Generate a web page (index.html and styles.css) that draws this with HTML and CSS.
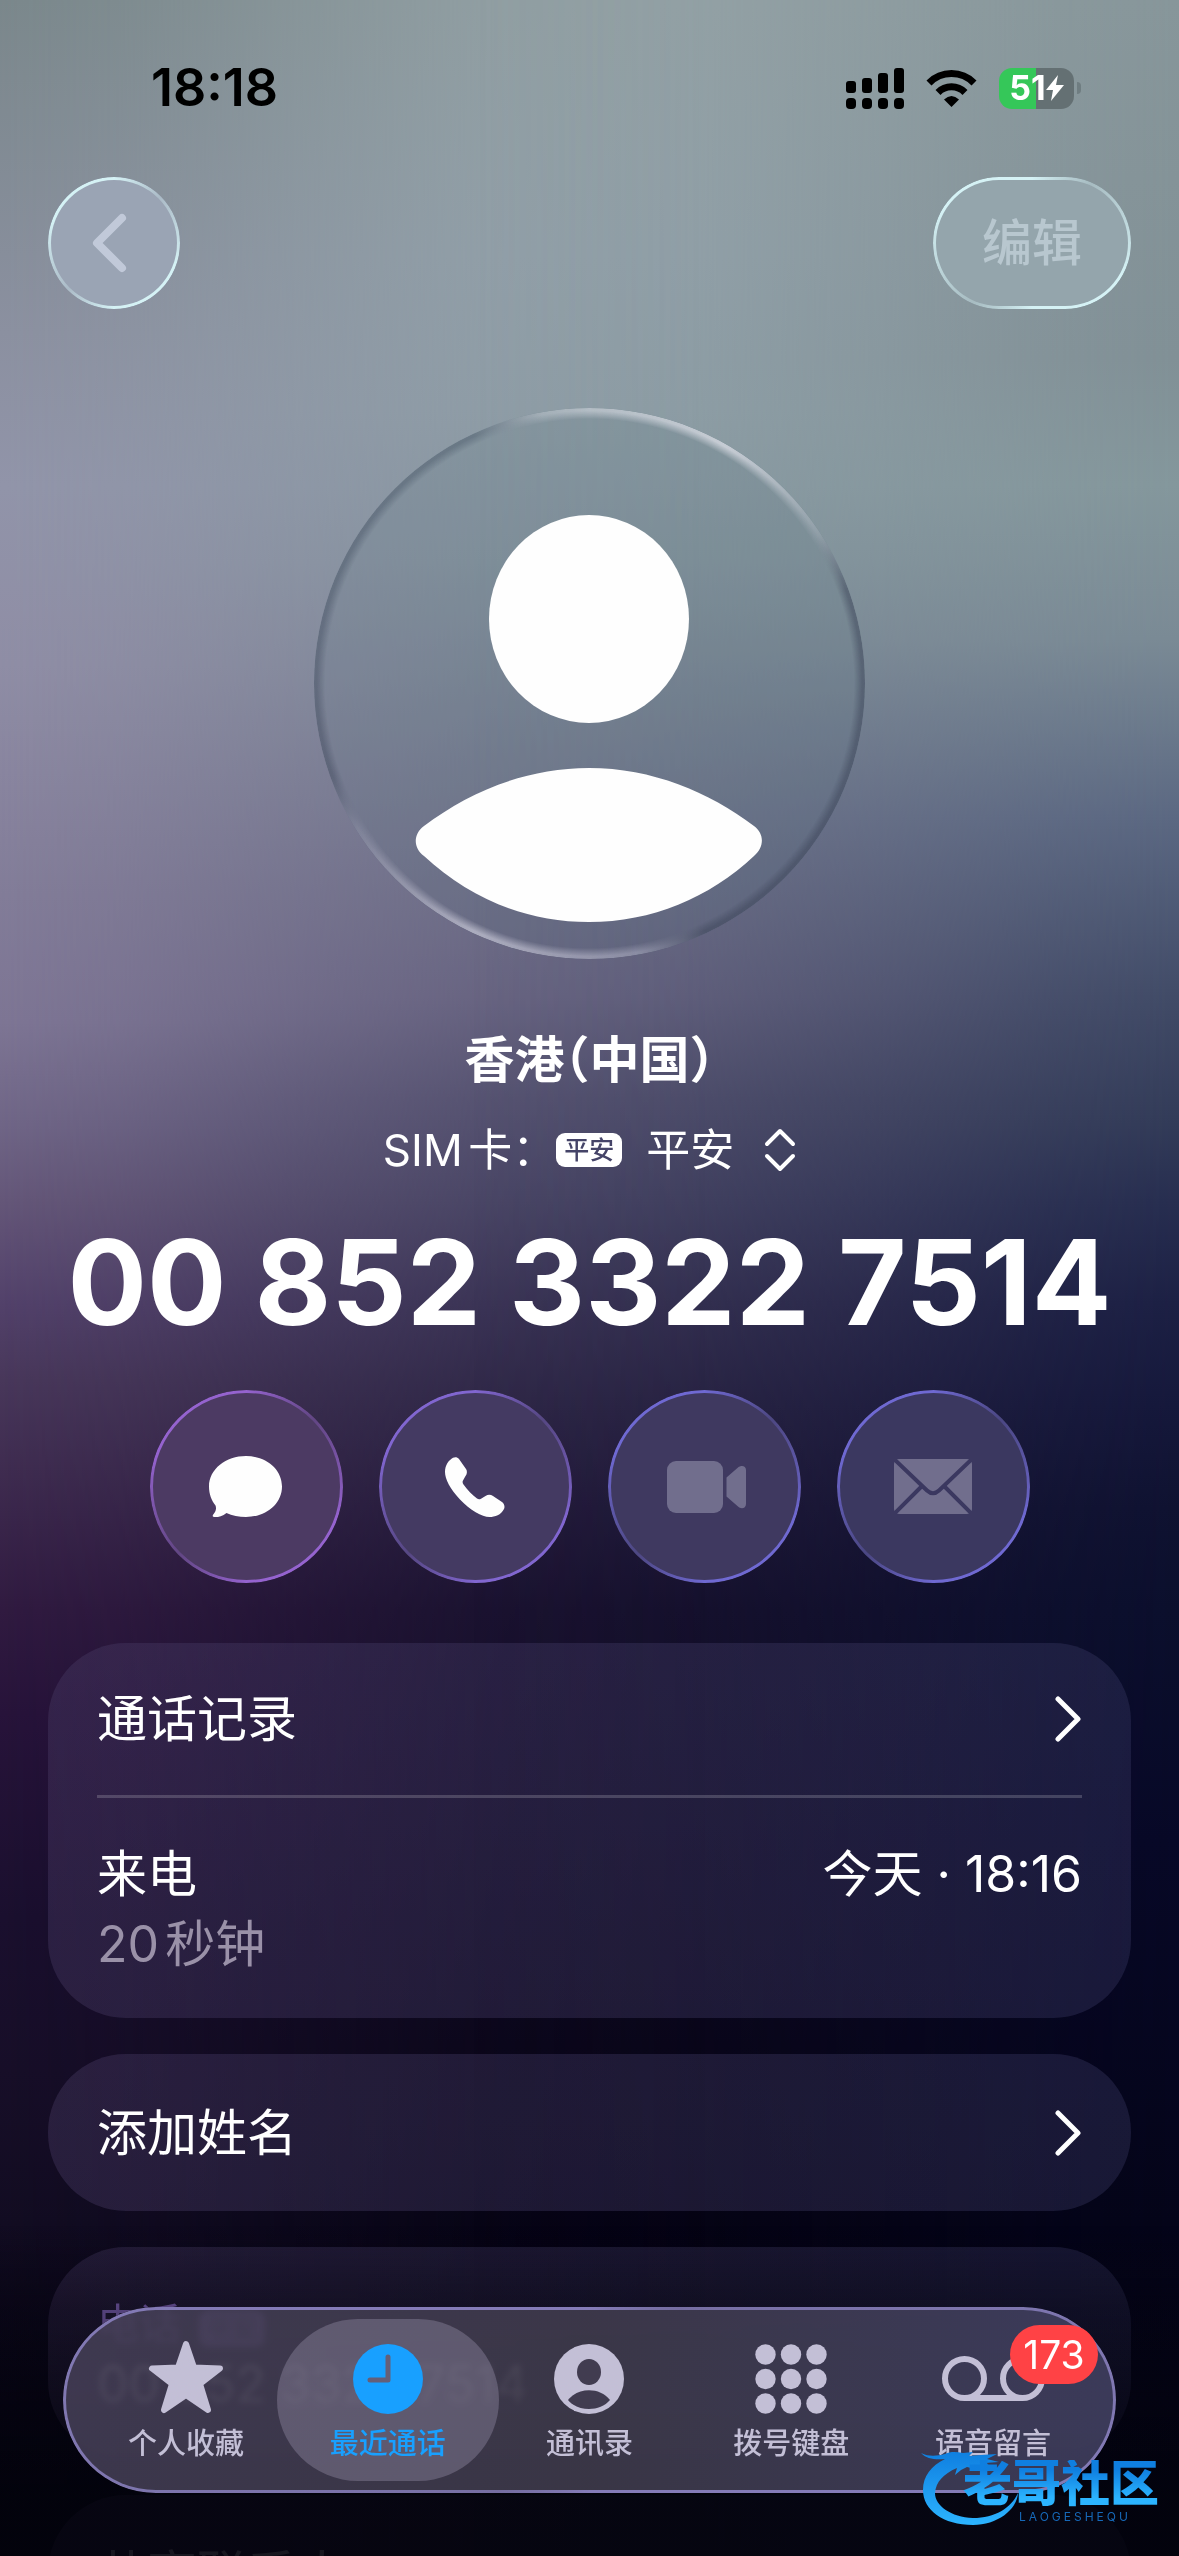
FILE: index.html
```html
<!doctype html>
<html lang="zh-CN">
    <head>
        <meta charset="UTF-8" />
        <meta name="viewport" content="width=device-width, initial-scale=1.0" />
        <title>通话详情</title>
        <link rel="stylesheet" href="styles.css">
    </head>
    <body>
        <div class="backdrop"></div>

        <main class="screen">
            <div class="status-bar">
                <span class="clock">18:18</span>
                <div class="status-icons">
                    <svg width="58" height="41" viewBox="0 0 58 41">
                        <rect x="0" y="13" width="10" height="12" rx="3" />
                        <rect x="16" y="10" width="10" height="15" rx="3" />
                        <rect x="32" y="5" width="10" height="20" rx="3" />
                        <rect x="48" y="0" width="10" height="25" rx="3" />
                        <rect x="0" y="30" width="10" height="11" rx="4" />
                        <rect x="16" y="30" width="10" height="11" rx="4" />
                        <rect x="32" y="30" width="10" height="11" rx="4" />
                        <rect x="48" y="30" width="10" height="11" rx="4" />
                    </svg>
                    <svg width="51" height="38" viewBox="0 0 51 38">
                        <g fill="none" stroke="#000" stroke-width="7">
                            <path d="M3 14A31.500 31.500 0 0 1 48 14" />
                            <path d="M12 23.500A19 19 0 0 1 39 23.500" />
                        </g>
                        <path d="M25.500 38L18 30.500Q25.500 23.500 33 30.500Z" />
                    </svg>
                    <div class="battery">
                        <span>51</span>
                        <svg width="18" height="26" viewBox="0 0 18 26">
                            <path d="M12 0L0 15H7L5 26L18 10H10Z" fill="#fff" />
                        </svg>
                    </div>
                </div>
            </div>

            <nav class="toolbar">
                <button class="glass back-button" aria-label="返回">
                    <svg width="36" height="60" viewBox="0 0 36 60">
                        <path d="M31 5L6 30L31 55" />
                    </svg>
                </button>
                <button class="glass edit-button">编辑</button>
            </nav>

            <div class="avatar">
                <svg viewBox="0 0 551 551">
                    <ellipse cx="275" cy="211" rx="100" ry="104" />
                    <path
                        d="M110 418C155 384 212 360 275 360C338 360 395 384 440 418C451 426 450 440 440 448C395 490 338 514 275 514C212 514 155 490 110 448C99 440 99 426 110 418Z"
                    />
                </svg>
            </div>

            <h1>香港（中国）</h1>

            <button class="sim-picker">
                <span>SIM卡：</span>
                <span class="sim-badge">平安</span>
                <span>平安</span>
                <svg width="32" height="44" viewBox="0 0 32 44">
                    <path d="M3 16L16 3L29 16M3 28L16 41L29 28" />
                </svg>
            </button>

            <p class="phone-number">00 852 3322 7514</p>

            <div class="actions">
                <button class="glass action message" aria-label="信息">
                    <svg width="74" height="62" viewBox="0 0 74 62">
                        <path
                            d="M37 0C57 0 73 13 73 30.500S57 61 37 61C30 61 23 59.500 17.500 57C13 60.500 8 61.500 5 61C3 60.500 3.500 59 5 57.500C7 55 7.500 52 6.500 49.500C2.500 44.500 0 38 0 30.500C0 13 17 0 37 0Z"
                        />
                    </svg>
                </button>
                <button class="glass action call" aria-label="呼叫">
                    <svg width="60" height="60" viewBox="0 0 60 60">
                        <path
                            d="M0 15C0 8 4 3 8 .8C10-.4 12.500 0 14 2L21 12C22.500 14 22 17 20.500 19L18 23.500C17.300 25 17.500 26 18.500 27.500C22.500 33 27 38 32 41.500C33.500 42.500 34.500 42.500 36 41.700L40.500 39C43 37.300 45.500 37.300 48 39L57 45C59.500 47 60 49.500 59 52C56 58 50 60 44.500 60C37 60 25 53 15 42.500C5 32 0 22 0 15Z"
                        />
                    </svg>
                </button>
                <button class="glass action video" aria-label="视频" disabled>
                    <svg width="86" height="52" viewBox="-6 0 86 52">
                        <rect width="56" height="52" rx="9" />
                        <path
                            d="M59.500 16.500L71 6.500C74 4 79 4.500 79 9V43C79 47.500 74 48.500 71 45.500L59.500 35.500Z"
                        />
                    </svg>
                </button>
                <button class="glass action mail" aria-label="邮件" disabled>
                    <svg width="78" height="55" viewBox="0 0 78 55">
                        <mask id="envelope">
                            <rect width="78" height="55" fill="#fff" />
                            <g fill="none" stroke="#000" stroke-width="4">
                                <path d="M0 0L33 31.500Q39 37 45 31.500L78 0" />
                                <path d="M0 55L29 26M78 55L49 26" />
                            </g>
                        </mask>
                        <rect width="78" height="55" rx="5" mask="url(#envelope)" />
                    </svg>
                </button>
            </div>

            <section class="card">
                <a class="card-row" href="#history">
                    <span>通话记录</span>
                    <svg width="27" height="46" viewBox="0 0 27 46">
                        <path d="M3 3L23 23L3 43" />
                    </svg>
                </a>
                <div class="call-entry">
                    <div>
                        <p>来电</p>
                        <p class="duration">20秒钟</p>
                    </div>
                    <time>今天 · 18:16</time>
                </div>
            </section>

            <section class="card">
                <a class="card-row" href="#name">
                    <span>添加姓名</span>
                    <svg width="27" height="46" viewBox="0 0 27 46">
                        <path d="M3 3L23 23L3 43" />
                    </svg>
                </a>
            </section>

            <section class="card phone-card">
                <p class="phone-label">电话 <span class="sim-badge">平安</span></p>
                <p>00 852 3322 7514</p>
            </section>

            <section class="card share-card">
                <a class="card-row" href="#share">共享联系人</a>
            </section>
        </main>

        <div class="bottom-fade"></div>

        <nav class="glass tab-bar">
            <a class="tab" href="#favorites">
                <svg width="76" height="74" viewBox="0 0 76 74">
                    <path
                        d="M38 4L46 27.500L72 28.500L52 44L60 70L38 55L16 70L24 44L4 28.500L30 27.500Z"
                        stroke="currentColor"
                        stroke-width="6"
                        stroke-linejoin="round"
                    />
                </svg>
                个人收藏
            </a>
            <a class="tab active" href="#recents">
                <svg width="70" height="70" viewBox="0 0 70 70">
                    <circle cx="35" cy="35" r="35" />
                    <path
                        d="M35 13V36H17"
                        fill="none"
                        stroke="#655f78"
                        stroke-width="5"
                        stroke-linecap="round"
                        stroke-linejoin="round"
                    />
                </svg>
                最近通话
            </a>
            <a class="tab" href="#contacts">
                <svg width="70" height="70" viewBox="0 0 70 70">
                    <circle cx="35" cy="35" r="35" />
                    <g fill="#413c50">
                        <ellipse cx="35" cy="28" rx="12" ry="13" />
                        <path d="M14 56C24 43 46 43 56 56C46 68 24 68 14 56Z" />
                    </g>
                </svg>
                通讯录
            </a>
            <a class="tab" href="#keypad">
                <svg width="72" height="70" viewBox="0 0 72 70">
                    <circle cx="10.500" cy="10.500" r="10.200" />
                    <circle cx="36" cy="10.500" r="10.200" />
                    <circle cx="61.500" cy="10.500" r="10.200" />
                    <circle cx="10.500" cy="35" r="10.200" />
                    <circle cx="36" cy="35" r="10.200" />
                    <circle cx="61.500" cy="35" r="10.200" />
                    <circle cx="10.500" cy="59.500" r="10.200" />
                    <circle cx="36" cy="59.500" r="10.200" />
                    <circle cx="61.500" cy="59.500" r="10.200" />
                </svg>
                拨号键盘
            </a>
            <a class="tab" href="#voicemail">
                <svg class="tape" width="103" height="46" viewBox="0 0 103 46">
                    <g fill="none" stroke="currentColor" stroke-width="6">
                        <circle cx="22.500" cy="22.500" r="19.500" />
                        <circle cx="80.500" cy="22.500" r="19.500" />
                        <path d="M22.500 42H80.500" />
                    </g>
                </svg>
                语音留言
                <span class="tab-badge">173</span>
            </a>
        </nav>

        <!-- community stamp -->
        <div class="stamp">
            <svg width="98" height="76" viewBox="0 0 98 76">
                <defs>
                    <linearGradient id="wave" x1="0" y1="0" x2="0" y2="1">
                        <stop offset="0" stop-color="#0f7fe0" />
                        <stop offset="1" stop-color="#2cb4ff" />
                    </linearGradient>
                </defs>
                <path
                    fill="url(#wave)"
                    d="M0 3C8 7 16 6 24 4C30 1 36 2 42 3L52 2L48 6L60 5L76 4L66 9L78 12L64 13L75 19L58 16L62 21L46 17L40 20L34 25L36 18C22 24 15 32 14 43C14 56 30 67 52 68C74 68 90 58 97 43C96 60 76 75 52 75C22 75 2 60 2 40C2 26 10 16 24 9C15 10 5 9 0 3Z"
                />
            </svg>
            <div class="stamp-text">
                <strong>老哥社区</strong>
                <small>LAOGESHEQU</small>
            </div>
        </div>
    </body>
</html>
```
FILE: styles.css
```css
* {
    margin: 0;
    padding: 0;
    box-sizing: border-box;
}

body {
    height: 100vh;
    overflow: hidden;
    background: #05040f;
    color: white;
    font-family: Inter, "Noto Sans CJK SC", sans-serif;
    font-size: 50px;
    line-height: 70px;
    text-autospace: normal;
}

button {
    border: none;
    background: none;
    color: inherit;
    font: inherit;
}

a {
    color: inherit;
    text-decoration: none;
}

svg {
    display: block;
    flex: none;
}

/* Blurred wallpaper: a center column with left and right edges faded in */
.backdrop,
.backdrop::before,
.backdrop::after {
    position: fixed;
    inset: 0;
}

.backdrop {
    background: linear-gradient(
        #95a3a7 0%,
        #93a2aa 10%,
        #8f9fa7 16%,
        #85959e 22%,
        #7a8594 27%,
        #6e7289 33%,
        #64617e 39%,
        #514f6d 43%,
        #454362 47%,
        #373252 51%,
        #2b2544 55%,
        #211a39 59%,
        #17112d 63%,
        #120d26 70%,
        #0a0619 80%,
        #050313 88%,
        #020208 100%
    );
}

.backdrop::before {
    content: "";
    background: linear-gradient(
        #7a878b 0%,
        #8b90a0 13%,
        #9194a9 19%,
        #8f8da5 26%,
        #827c98 35%,
        #7d7594 40%,
        #6f6586 44%,
        #645678 47%,
        #52416a 51%,
        #48375a 54%,
        #301a40 63%,
        #27133a 67%,
        #1a0f2e 75%,
        #170e28 81%,
        #120c22 87%,
        #080516 94%,
        #040310 100%
    );
    mask-image: linear-gradient(
        to right,
        #000,
        rgba(0, 0, 0, 0.85) 10%,
        rgba(0, 0, 0, 0.5) 25%,
        rgba(0, 0, 0, 0.15) 42%,
        transparent 60%
    );
}

.backdrop::after {
    content: "";
    background: linear-gradient(
        #87969a 0%,
        #819096 14%,
        #84979c 19%,
        #7a8a95 25%,
        #5b6882 32%,
        #414b67 39%,
        #323b58 44%,
        #272e50 47%,
        #1c2044 51%,
        #15183b 55%,
        #0f1231 59%,
        #0b0f2d 63%,
        #070827 72%,
        #040419 87%,
        #03031a 100%
    );
    mask-image: linear-gradient(
        to left,
        #000,
        rgba(0, 0, 0, 0.85) 10%,
        rgba(0, 0, 0, 0.5) 25%,
        rgba(0, 0, 0, 0.15) 42%,
        transparent 60%
    );
}

.screen {
    position: relative;
    height: 100%;
    padding: 0 48px;
    overflow-y: auto;
    scrollbar-width: none;
    display: flex;
    flex-direction: column;
}

.screen > * {
    flex: none;
}

/* Status bar */
.status-bar {
    display: flex;
    align-items: center;
    justify-content: space-between;
    height: 60px;
    margin-top: 58px;
    padding: 0 50px 0 103px;
    color: #000;
}

.clock {
    font-size: 52px;
    font-weight: 600;
}

.status-icons {
    display: flex;
    align-items: center;
    gap: 22px;
}

.battery {
    position: relative;
    display: flex;
    align-items: center;
    justify-content: center;
    width: 75px;
    height: 41px;
    margin-right: 7px;
    border-radius: 13px;
    background: linear-gradient(to right, #35c759 50%, #647073 50%);
    color: white;
    font-size: 34px;
    font-weight: 700;
    line-height: 40px;
}

.battery::after {
    content: "";
    position: absolute;
    right: -7px;
    width: 4px;
    height: 12px;
    border-radius: 0 4px 4px 0;
    background: #6f7d81;
}

/* Glass controls with a bright rim */
.glass {
    --rim: #d5f2f5;
    --rim-soft: rgba(213, 242, 245, 0.3);
    position: relative;
    display: flex;
    align-items: center;
    justify-content: center;
}

.glass::before {
    content: "";
    position: absolute;
    inset: 0;
    padding: 3px;
    border-radius: inherit;
    background: conic-gradient(
        var(--rim),
        var(--rim-soft) 45deg,
        var(--rim) 110deg,
        var(--rim) 180deg,
        var(--rim-soft) 225deg,
        var(--rim) 290deg,
        var(--rim)
    );
    mask:
        linear-gradient(#000 0 0) content-box exclude,
        linear-gradient(#000 0 0);
    pointer-events: none;
}

.toolbar {
    display: flex;
    justify-content: space-between;
    margin-top: 59px;
}

.back-button,
.edit-button {
    height: 132px;
    border-radius: 66px;
}

.back-button {
    width: 132px;
    padding-right: 10px;
    background: #9aa4b4;
}

.back-button path {
    fill: none;
    stroke: #c1c9d9;
    stroke-width: 8;
    stroke-linecap: round;
    stroke-linejoin: round;
}

.edit-button {
    width: 198px;
    background: #94a5ac;
    color: #b8c7cf;
    font-weight: 500;
}

/* Contact */
.avatar {
    position: relative;
    align-self: center;
    width: 551px;
    height: 551px;
    margin-top: 99px;
    border-radius: 50%;
    background: rgba(90, 110, 125, 0.16);
}

.avatar::before {
    content: "";
    position: absolute;
    inset: 0;
    border-radius: 50%;
    background: conic-gradient(
        rgba(210, 215, 222, 0.6),
        rgba(215, 218, 226, 0.8) 30deg,
        rgba(190, 195, 205, 0.3) 57deg,
        rgba(60, 68, 88, 0.5) 70deg,
        rgba(60, 68, 88, 0.5) 155deg,
        rgba(180, 180, 200, 0.5) 170deg,
        rgba(200, 200, 215, 0.7) 205deg,
        rgba(180, 180, 200, 0.2) 238deg,
        rgba(70, 78, 98, 0.5) 250deg,
        rgba(80, 95, 110, 0.5) 335deg,
        rgba(210, 215, 222, 0.4) 350deg,
        rgba(210, 215, 222, 0.6)
    );
    mask-image: radial-gradient(closest-side, transparent 96%, #000 99%);
}

.avatar svg {
    fill: #fefefe;
}

h1 {
    margin-top: 71px;
    font-size: 50px;
    font-weight: 600;
    line-height: 60px;
    text-align: center;
    font-feature-settings: "halt";
}

.sim-picker {
    display: flex;
    align-items: center;
    align-self: center;
    height: 60px;
    margin-top: 30px;
    font-size: 44px;
    line-height: 60px;
}

.sim-picker path {
    fill: none;
    stroke: white;
    stroke-width: 4;
    stroke-linecap: round;
    stroke-linejoin: round;
}

.sim-picker svg {
    margin-left: 30px;
}

.sim-badge {
    display: inline-block;
    height: 34px;
    margin-right: 24px;
    padding: 0 8px;
    border-radius: 9px;
    background: white;
    color: #454468;
    font-size: 25px;
    font-weight: 500;
    line-height: 34px;
}

.phone-number {
    margin-top: 42px;
    font-size: 118px;
    font-weight: 700;
    line-height: 120px;
    text-align: center;
    white-space: nowrap;
}

.actions {
    display: flex;
    justify-content: center;
    gap: 36px;
    margin-top: 48px;
}

.action {
    --rim: #6f69d2;
    --rim-soft: rgba(111, 105, 210, 0.3);
    width: 193px;
    height: 193px;
    border-radius: 50%;
    background: #3f3960;
}

.action svg {
    fill: #fefefe;
}

.action:disabled svg {
    fill: #716e8d;
}

.message {
    --rim: #9563cf;
    --rim-soft: rgba(149, 99, 207, 0.3);
    background: #4c3a63;
}

.call {
    --rim: #8166d0;
    --rim-soft: rgba(129, 102, 208, 0.3);
    background: #443a62;
}

.mail {
    background: #3b3860;
}

/* Cards */
.card {
    margin-top: 36px;
    padding: 0 49px;
    border-radius: 78px;
    background: linear-gradient(
        to right,
        rgba(76, 62, 104, 0.38),
        rgba(64, 64, 108, 0.34)
    );
}

.actions + .card {
    margin-top: 60px;
}

.card-row {
    display: flex;
    align-items: center;
    justify-content: space-between;
    height: 157px;
}

.card-row:not(:last-child) {
    height: 152px;
}

.card-row path {
    fill: none;
    stroke: white;
    stroke-width: 5;
    stroke-linecap: round;
    stroke-linejoin: round;
}

.call-entry {
    display: flex;
    justify-content: space-between;
    padding: 41px 0 39px;
    border-top: 3px solid rgba(255, 255, 255, 0.18);
}

.duration {
    color: #9a91a8;
}

.phone-card {
    padding: 52px 49px 40px;
}

.phone-label {
    color: #8a6cc4;
    font-size: 42px;
    line-height: 50px;
}

.phone-label .sim-badge {
    height: 36px;
    margin: 12px 0 0 6px;
    background: #8a6cc4;
    vertical-align: top;
}

.share-card .card-row {
    opacity: 0.5;
}

.bottom-fade {
    position: fixed;
    inset: auto 0 0;
    height: 330px;
    background: linear-gradient(
        transparent,
        rgba(4, 3, 14, 0.4) 25%,
        rgba(3, 3, 12, 0.85) 80%
    );
    pointer-events: none;
}

/* Tab bar */
.tab-bar {
    --rim: #857cb8;
    --rim-soft: rgba(133, 124, 184, 0.8);
    position: fixed;
    right: 63px;
    bottom: 63px;
    left: 63px;
    height: 186px;
    padding: 12px 22px;
    border-radius: 93px;
    background: linear-gradient(
        to right,
        rgba(70, 64, 88, 0.86),
        rgba(65, 61, 78, 0.88) 50%,
        rgba(66, 65, 98, 0.88)
    );
    backdrop-filter: blur(3px);
}

.tab {
    position: relative;
    display: flex;
    flex: 1;
    flex-direction: column;
    align-items: center;
    justify-content: flex-end;
    height: 162px;
    padding-bottom: 17px;
    color: #c3bfd6;
    font-size: 29px;
    font-weight: 500;
    line-height: 40px;
    fill: currentColor;
}

.tab svg {
    position: relative;
    margin-bottom: 10px;
}

.tab .tape {
    margin-bottom: 22px;
}

.active {
    color: #18a0ff;
}

.active::before {
    content: "";
    position: absolute;
    inset: 0 -10px;
    z-index: -1;
    border-radius: 81px;
    background: rgba(140, 134, 158, 0.45);
}

.tab-badge {
    position: absolute;
    top: 6px;
    right: -4px;
    width: 88px;
    height: 59px;
    border-radius: 30px;
    background: #ff4245;
    color: white;
    font-size: 39px;
    font-weight: 400;
    line-height: 59px;
    text-align: center;
}

.stamp {
    position: fixed;
    right: 20px;
    bottom: 30px;
    display: flex;
    align-items: flex-end;
    pointer-events: none;
}

.stamp-text {
    display: flex;
    flex-direction: column;
    margin-left: -56px;
}

.stamp strong {
    background: linear-gradient(#0f7fe0 20%, #2cb4ff 80%);
    background-clip: text;
    color: transparent;
    font-size: 49px;
    font-weight: 900;
    line-height: 48px;
}

.stamp small {
    padding-left: 56px;
    color: #1668b8;
    font-size: 12px;
    letter-spacing: 3px;
    line-height: 18px;
}
```
